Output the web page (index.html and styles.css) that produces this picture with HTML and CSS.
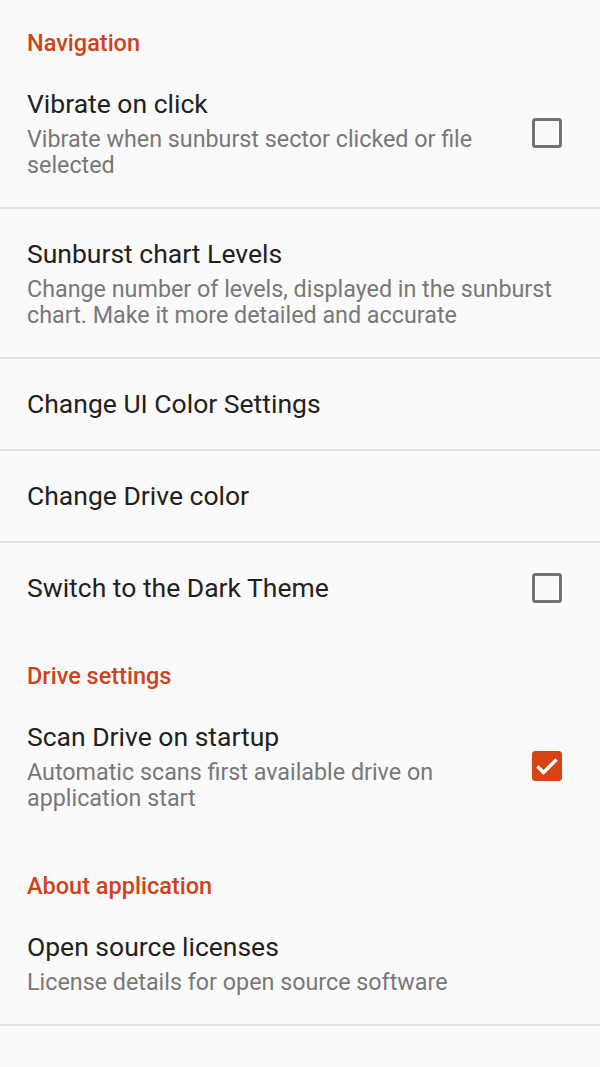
FILE: index.html
```html
<html>

<head>
    <title>Settings</title>
    <link rel="stylesheet" href="styles.css">
</head>

<body>
    <div class="prefs">
        <div class="cat">Navigation</div>

        <div class="pref line">
            <div class="text">
                <div class="title">Vibrate on click</div>
                <div class="summary">Vibrate when sunburst sector clicked or file selected</div>
            </div>
            <span class="box"></span>
        </div>

        <div class="pref line">
            <div class="text">
                <div class="title">Sunburst chart Levels</div>
                <div class="summary">Change number of levels, displayed in the sunburst chart. Make it more detailed and accurate</div>
            </div>
        </div>

        <div class="pref line">
            <div class="text">
                <div class="title">Change UI Color Settings</div>
            </div>
        </div>

        <div class="pref line">
            <div class="text">
                <div class="title">Change Drive color</div>
            </div>
        </div>

        <div class="pref">
            <div class="text">
                <div class="title">Switch to the Dark Theme</div>
            </div>
            <span class="box"></span>
        </div>

        <div class="cat">Drive settings</div>

        <div class="pref">
            <div class="text">
                <div class="title">Scan Drive on startup</div>
                <div class="summary">Automatic scans first available drive on application start</div>
            </div>
            <svg class="box-on" width="30" height="30" viewBox="0 0 30 30">
                <rect width="30" height="30" rx="3.5" fill="#d84315"/>
                <polyline points="5.5,15.5 11.5,21.5 24.5,8.5" fill="none" stroke="#fff" stroke-width="3.4"/>
            </svg>
        </div>

        <div class="cat last">About application</div>

        <div class="pref line">
            <div class="text">
                <div class="title">Open source licenses</div>
                <div class="summary">License details for open source software</div>
            </div>
        </div>
    </div>
</body>

</html>
```

FILE: styles.css
```css
* {
    box-sizing: border-box;
}

body {
    margin: 0px;
    background-color: #fafafa;
    font-family: Roboto, "Noto Sans", sans-serif;
}

.cat {
    padding: 29px 27px 2px 27px;
    font-size: 23.5px;
    line-height: 28px;
    font-weight: 500;
    color: #d0431a;
}

.last {
    padding-top: 32px;
}

.pref {
    display: flex;
    align-items: center;
    padding: 29px 27px;
}

.line {
    border-bottom: 2px solid #e1e1e1;
}

.text {
    flex: 1;
}

.title {
    font-size: 26.5px;
    line-height: 32px;
    color: #212121;
}

.summary {
    margin-top: 6px;
    font-size: 23.3px;
    line-height: 26px;
    color: #787878;
}

.box {
    width: 30px;
    height: 30px;
    margin-left: 16px;
    margin-right: 11px;
    flex-shrink: 0;
    border: 3.3px solid #737373;
    border-radius: 3.5px;
}

.box-on {
    margin-left: 16px;
    margin-right: 11px;
    flex-shrink: 0;
}
```
